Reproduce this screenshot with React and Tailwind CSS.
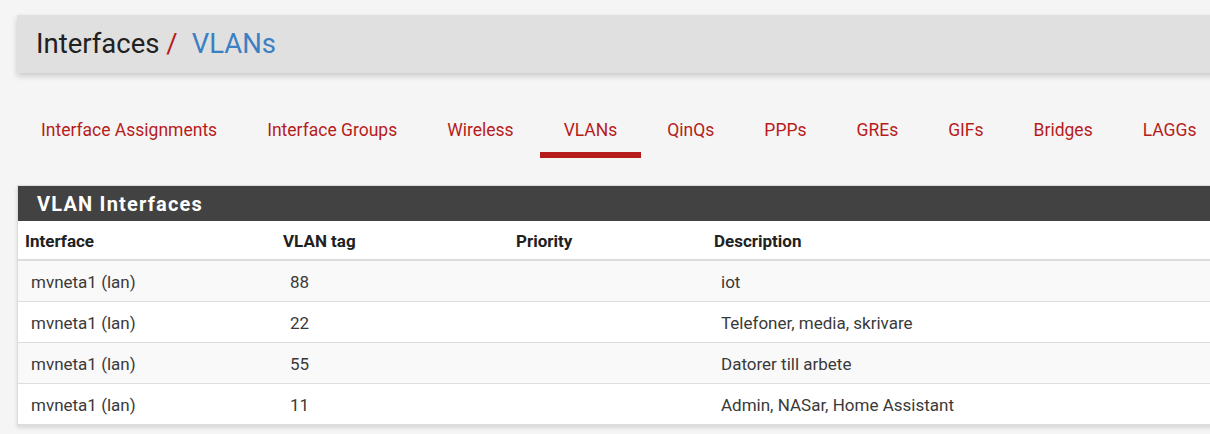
import React from "react";

const TABS = [
  "Interface Assignments",
  "Interface Groups",
  "Wireless",
  "VLANs",
  "QinQs",
  "PPPs",
  "GREs",
  "GIFs",
  "Bridges",
  "LAGGs",
];

const VLANS = [
  { iface: "mvneta1 (lan)", tag: "88", prio: "", descr: "iot" },
  { iface: "mvneta1 (lan)", tag: "22", prio: "", descr: "Telefoner, media, skrivare" },
  { iface: "mvneta1 (lan)", tag: "55", prio: "", descr: "Datorer till arbete" },
  { iface: "mvneta1 (lan)", tag: "11", prio: "", descr: "Admin, NASar, Home Assistant" },
];

const App = () => {
  return (
    <div className="min-h-[434px] bg-[#f5f5f5] pl-[17px] pt-[15px] font-['Roboto',sans-serif] overflow-hidden">
      {/* breadcrumb bar */}
      <div className="w-[1220px] h-[58px] bg-[#e0e0e0] flex items-center pl-[19px] shadow-[0_3px_6px_rgba(0,0,0,0.18)]">
        <h1 className="text-[27.5px] text-[#212121] leading-none">
          Interfaces <span className="text-[#b71c1c]">/</span>
          <span className="text-[#3b80c2] ml-[14px]">VLANs</span>
        </h1>
      </div>

      {/* tabs */}
      <ul className="flex gap-[2px] mt-[33px] h-[80px]">
        {TABS.map((tab) => (
          <li key={tab} className="relative">
            <a href="#" className="block px-6 pt-[13px] text-[17.5px] leading-[22px] text-[#b71c1c] whitespace-nowrap">
              {tab}
            </a>
            {tab === "VLANs" && (
              <span className="absolute left-0 right-0 top-[46px] h-[6px] bg-[#b71c1c]" />
            )}
          </li>
        ))}
      </ul>

      {/* panel */}
      <div className="mt-[-1px] w-[1220px] border border-[#dcdcdc] bg-white shadow-[0_2px_4px_rgba(0,0,0,0.12)]">
        <div className="h-[35px] bg-[#424242] flex items-center pl-[19px]">
          <h2 className="text-[20px] font-bold text-white tracking-[1.2px]">VLAN Interfaces</h2>
        </div>
        <table className="w-full border-collapse text-[17px] text-[#3a3a3a]">
          <thead>
            <tr className="h-[39px] border-b-2 border-[#dddddd] text-left text-[#212121]">
              <th className="w-[258px] pl-[7px] pt-[3px] font-bold">Interface</th>
              <th className="w-[233px] pl-[7px] pt-[3px] font-bold">VLAN tag</th>
              <th className="w-[198px] pl-[7px] pt-[3px] font-bold">Priority</th>
              <th className="pl-[7px] pt-[3px] font-bold">Description</th>
            </tr>
          </thead>
          <tbody>
            {VLANS.map((v, i) => (
              <tr
                key={v.tag}
                className={`h-[41px] border-b border-[#dddddd] ${i % 2 === 0 ? "bg-[#f9f9f9]" : "bg-white"}`}
              >
                <td className="pl-[13px] pt-[4px]">{v.iface}</td>
                <td className="pl-[14px] pt-[4px]">{v.tag}</td>
                <td className="pl-[14px] pt-[4px]">{v.prio}</td>
                <td className="pl-[14px] pt-[4px]">{v.descr}</td>
              </tr>
            ))}
          </tbody>
        </table>
      </div>
    </div>
  );
};

export default App;
